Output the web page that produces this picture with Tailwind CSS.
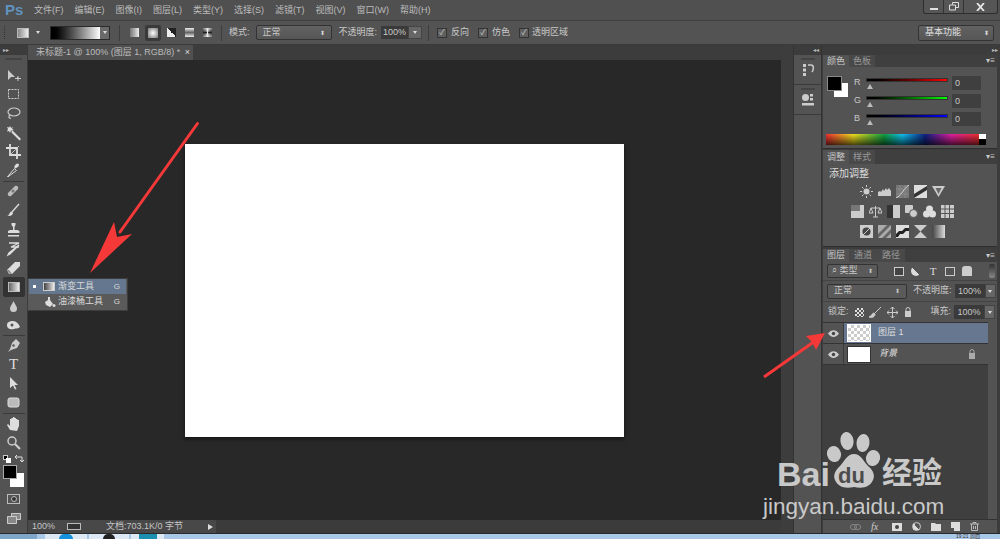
<!DOCTYPE html>
<html lang="zh-CN">
<head>
    <meta charset="UTF-8">
    <title>Photoshop CS6</title>
    <script src="https://cdn.jsdelivr.net/npm/@tailwindcss/browser@4"></script>
</head>
<body class="bg-[#535353]">
<div class="relative w-[1000px] h-[539px] overflow-hidden flex flex-col bg-[#535353] text-[#c8c8c8] text-[9px] font-['Liberation_Sans','Noto_Sans_CJK_SC',sans-serif]">

    <!-- menu bar -->
    <div class="h-[20px] shrink-0 flex items-center bg-[#505050] relative">
        <span class="w-[34px] pl-[5px] text-[15px] font-bold text-[#5f93bd]">Ps</span>
        <div class="flex gap-[11px] pt-[1px] text-[#bcbcbc]">
            <span>文件(F)</span><span>编辑(E)</span><span>图像(I)</span><span>图层(L)</span><span>类型(Y)</span><span>选择(S)</span><span>滤镜(T)</span><span>视图(V)</span><span>窗口(W)</span><span>帮助(H)</span>
        </div>
        <div class="absolute right-[2px] top-0 h-[14px] w-[75px] flex border border-t-0 border-[#2e2e2e] rounded-b-[3px] bg-[#565656] text-[#e8e8e8]">
            <div class="w-[20px] border-r border-[#333] flex items-end justify-center pb-[3px]"><div class="w-[8px] h-[2px] bg-[#e0e0e0]"></div></div>
            <div class="w-[20px] border-r border-[#333] flex items-center justify-center">
                <svg width="10" height="9" viewBox="0 0 10 9" fill="none" stroke="#e0e0e0"><path d="M3.500 2.500V.5h6v5H7"/><path d="M.5 3h6v5h-6z"/></svg>
            </div>
            <div class="flex-1 flex items-center justify-center">
                <svg width="9" height="8" viewBox="0 0 9 8" stroke="#e8e8e8" stroke-width="1.800"><path d="M1 0l7 8M8 0L1 8"/></svg>
            </div>
        </div>
    </div>

    <!-- options bar -->
    <div class="h-[25px] shrink-0 flex items-center bg-[#535353] border-t border-[#414141] border-b border-b-[#3a3a3a]">
        <div class="w-[2px] h-[13px] ml-[4px] border-l border-dotted border-[#333]"></div>
        <div class="ml-[11px] w-[12px] h-[10px] bg-gradient-to-r from-[#8a8a8a] to-[#f0f0f0] border border-[#bbb]"></div>
        <div class="ml-[7px] w-0 h-0 border-x-[2px] border-x-transparent border-t-[3px] border-t-[#ddd]"></div>
        <div class="ml-[10px] flex h-[14px] w-[60px] border border-[#2a2a2a]">
            <div class="w-[49px] bg-gradient-to-r from-black to-white"></div>
            <div class="flex-1 bg-[#6a6a6a] flex items-center justify-center"><div class="w-0 h-0 border-x-[2px] border-x-transparent border-t-[3px] border-t-[#ddd]"></div></div>
        </div>
        <div class="ml-[9px] w-px h-[16px] bg-[#3d3d3d]"></div>
        <div class="ml-[7px] flex items-center gap-[3px]">
            <div class="w-[15px] h-[15px] flex items-center justify-center"><div class="w-[9px] h-[9px] bg-gradient-to-r from-[#777] to-[#eee]"></div></div>
            <div class="w-[16px] h-[16px] bg-[#3a3a3a] rounded-[2px] flex items-center justify-center"><div class="w-[10px] h-[10px] bg-[radial-gradient(#fff,#777)]"></div></div>
            <div class="w-[15px] h-[15px] flex items-center justify-center"><div class="w-[9px] h-[9px] bg-[linear-gradient(45deg,#eee_50%,#222_50%)]"></div></div>
            <div class="w-[15px] h-[15px] flex items-center justify-center"><div class="w-[9px] h-[9px] bg-[linear-gradient(#eee,#666,#eee)]"></div></div>
            <div class="w-[15px] h-[15px] flex items-center justify-center"><div class="w-[9px] h-[9px] bg-[conic-gradient(#eee,#222,#eee,#222,#eee)]"></div></div>
        </div>
        <div class="ml-[6px] w-px h-[16px] bg-[#3d3d3d]"></div>
        <span class="ml-[7px]">模式:</span>
        <div class="ml-[6px] w-[76px] h-[15px] flex items-center justify-between px-[6px] rounded-[2px] border border-[#333] bg-gradient-to-b from-[#626262] to-[#565656]">
            <span>正常</span><span class="text-[6px] leading-[6px] text-[#ddd]">⬍</span>
        </div>
        <span class="ml-[7px]">不透明度:</span>
        <div class="ml-[4px] w-[27px] h-[13px] leading-[13px] bg-[#3a3a3a] text-center">100%</div>
        <div class="w-[14px] h-[13px] bg-[#666] border border-[#444] flex items-center justify-center"><div class="w-0 h-0 border-x-[2px] border-x-transparent border-t-[3px] border-t-[#ddd]"></div></div>
        <div class="ml-[6px] w-px h-[16px] bg-[#3d3d3d]"></div>
        <div class="ml-[8px] w-[10px] h-[10px] border border-[#333] bg-[#606060] text-[8px] leading-[8px] text-center">✓</div>
        <span class="ml-[4px]">反向</span>
        <div class="ml-[9px] w-[10px] h-[10px] border border-[#333] bg-[#606060] text-[8px] leading-[8px] text-center">✓</div>
        <span class="ml-[4px]">仿色</span>
        <div class="ml-[9px] w-[10px] h-[10px] border border-[#333] bg-[#606060] text-[8px] leading-[8px] text-center">✓</div>
        <span class="ml-[3px]">透明区域</span>
        <div class="ml-auto mr-[6px] w-[76px] h-[16px] flex items-center justify-between pl-[6px] pr-[4px] rounded-[2px] border border-[#333] bg-gradient-to-b from-[#626262] to-[#565656] text-[#e0e0e0]">
            <span>基本功能</span><span class="text-[6px] leading-[6px]">⬍</span>
        </div>
    </div>

    <div class="flex-1 min-h-0 flex">
        <!-- tools -->
        <div class="w-[28px] shrink-0 flex flex-col items-center bg-[#535353] border-r border-[#3a3a3a] text-[#ccc]">
            <div class="w-full h-[10px] bg-[#3c3c3c] text-[6px] leading-[10px] pl-[3px] text-[#bbb]">▸▸</div>
            <div class="w-[17px] h-[2px] mt-[3px] mb-[6px] bg-[#444]"></div>
            <div class="flex flex-col items-center">
                <svg class="w-[19px] h-[19px]" viewBox="0 0 19 19" fill="#ccc"><path d="M4 4v10l3-3h4zM12 11h1v1h1v-1h-1z"/><path d="M11 12h6v1h-6zM13.500 10h1v5h-1z"/></svg>
                <svg class="w-[19px] h-[19px]" viewBox="0 0 19 19" fill="none" stroke="#ccc" stroke-dasharray="2 1"><path d="M4.500 4.500h10v9h-10z"/></svg>
                <svg class="w-[19px] h-[19px]" viewBox="0 0 19 19" fill="none" stroke="#ccc" stroke-width="1.200"><ellipse cx="10" cy="8" rx="6" ry="4"/><path d="M6 11c-2 1-1 4 1 3"/></svg>
                <svg class="w-[19px] h-[19px]" viewBox="0 0 19 19" fill="#ddd"><path d="M8 7l1.500 1.500L17 16l-1.500 1.500-8-8z"/><path d="M6 3l1 2 2-1-1 2 2 1-3 .5L6 10l-1-2-2 .5L4 6 3 4l2 .5z"/></svg>
                <svg class="w-[19px] h-[19px]" viewBox="0 0 19 19" fill="none" stroke="#ddd" stroke-width="1.800"><path d="M6 2v11h11M2 6h11v11"/><path d="M15 4L5 14" stroke-width=".8"/></svg>
                <svg class="w-[19px] h-[19px]" viewBox="0 0 19 19"><path d="M5 15l-1 1-.5-.5 1-1 6-7 2 2z" fill="none" stroke="#ddd"/><path d="M10 6l2-3 2-.5 1 1-.5 2-3 2z" fill="#ddd"/></svg>
            </div>
            <div class="w-[21px] h-px mt-[1px] bg-[#3a3a3a]"></div>
            <div class="flex flex-col items-center">
                <svg class="w-[19px] h-[19px]" viewBox="0 0 19 19"><path d="M4 11l7-7c2-1 4 1 3 3l-7 7c-2 1-4-1-3-3z" fill="#bbb"/><circle cx="9" cy="9" r="1.500" fill="#777"/></svg>
                <svg class="w-[19px] h-[19px]" viewBox="0 0 19 19"><path d="M15 3L8 11" stroke="#ddd" stroke-width="1.300"/><path d="M8 10.500c-2 0-2.500 2-3 3s-1.500 1-2 1c2 1 5 .5 6-2z" fill="#ddd"/></svg>
                <svg class="w-[19px] h-[19px]" viewBox="0 0 19 19" fill="#ddd"><path d="M7.500 3h4v2l-1 2v3h3l2 1v2H4v-2l2-1h3V7L7.500 5zM4 15h11v1.500H4z"/></svg>
                <svg class="w-[19px] h-[19px]" viewBox="0 0 19 19" fill="none" stroke="#ddd" stroke-width="1.300"><path d="M5 4h10l-8 4h8"/><path d="M15 6L6 15l-2 1 1-2z" fill="#ddd"/></svg>
                <svg class="w-[19px] h-[19px]" viewBox="0 0 19 19"><path d="M3 12l8-8h5v4l-8 8H5z" fill="#ddd"/><path d="M3 12l3 4h2l-3-4z" fill="#888"/></svg>
            </div>
            <div class="w-[22px] h-[20px] shrink-0 bg-[#333] rounded-[2px] flex items-center justify-center"><div class="w-[12px] h-[10px] bg-gradient-to-r from-[#666] to-[#eee] border border-[#bbb]"></div></div>
            <div class="flex flex-col items-center">
                <svg class="w-[19px] h-[19px]" viewBox="0 0 19 19"><path d="M9.500 4c-1 3-3.500 5-3.500 7.500a3.500 3.500 0 0 0 7 0C13 9 10.500 7 9.500 4z" fill="#ccc"/></svg>
                <svg class="w-[19px] h-[19px]" viewBox="0 0 19 19"><path d="M3 9c0-3 3-4 6-4s6 3 7 6c-2 2-4 1-6 2-3 1-7 0-7-4z" fill="#ddd"/><circle cx="8" cy="9" r="1.500" fill="#555"/></svg>
            </div>
            <div class="w-[22px] h-px bg-[#3a3a3a]"></div>
            <div class="flex flex-col items-center">
                <svg class="w-[19px] h-[19px]" viewBox="0 0 19 19"><path d="M12 3l4 4-3 5-6 2-3 2 2-3 2-6z" fill="#ccc"/><circle cx="9.500" cy="9.500" r="1.200" fill="#555"/></svg>
                <div class="w-[19px] h-[19px] text-center text-[15px] leading-[19px] text-[#ddd] font-['Liberation_Serif',serif]">T</div>
                <svg class="w-[19px] h-[19px]" viewBox="0 0 19 19"><path d="M6 3v11l3-2.500 2 4 1.500-.5-2-4h3.500z" fill="#ddd"/></svg>
                <svg class="w-[19px] h-[19px]" viewBox="0 0 19 19"><rect x="4" y="5" width="11" height="9" rx="2" fill="#bbb" stroke="#ddd"/></svg>
            </div>
            <div class="w-[22px] h-px mt-[1px] bg-[#3a3a3a]"></div>
            <div class="flex flex-col items-center">
                <svg class="w-[19px] h-[19px]" viewBox="0 0 19 19" fill="#ddd"><path d="M6 16l-3-5 1-1 2 2V5h1.500v-1H9v-1h1.500v1H12v1h1.500v1H15v6l-2 5z"/></svg>
                <svg class="w-[19px] h-[19px]" viewBox="0 0 19 19" fill="none" stroke="#ccc" stroke-width="1.500"><circle cx="8" cy="8" r="4"/><path d="M11 11l5 5" stroke-width="2.200"/></svg>
            </div>
            <div class="w-full flex justify-between px-[3px] mt-[1px] h-[11px] items-center">
                <div class="relative w-[8px] h-[8px]"><div class="absolute left-0 top-0 w-[5px] h-[5px] bg-black border border-[#ccc]"></div><div class="absolute right-0 bottom-0 w-[5px] h-[5px] bg-white"></div></div>
                <svg class="w-[9px] h-[9px]" viewBox="0 0 9 9" fill="none" stroke="#ddd"><path d="M1 3h6v5M0 3l2-2M0 3l2 2M5 6l2 2 2-2"/></svg>
            </div>
            <div class="relative w-[21px] h-[23px] mt-[1px] shrink-0">
                <div class="absolute left-[7px] top-[8px] w-[14px] h-[14px] bg-white"></div>
                <div class="absolute left-0 top-0 w-[14px] h-[14px] bg-black border border-[#aaa]"></div>
            </div>
            <div class="w-[13px] h-[10px] mt-[6px] border border-[#bbb] flex items-center justify-center"><div class="w-[6px] h-[6px] rounded-full border border-[#bbb] bg-[#333]"></div></div>
            <svg class="w-[14px] h-[11px] mt-[9px]" viewBox="0 0 14 11" fill="#888" stroke="#ccc"><path d="M4.500.5h9v6h-9z"/><path d="M.5 3.500h9v7h-9z"/></svg>
        </div>

        <!-- document area -->
        <div class="w-[753px] shrink-0 flex flex-col">
            <div class="h-[15px] shrink-0 bg-[#3c3c3c] flex">
                <div class="w-[165px] pl-[8px] pr-[3px] flex items-center justify-between bg-[#505050] text-[#bcbcbc]">
                    <span>未标题-1 @ 100% (图层 1, RGB/8) *</span><span class="text-[#ddd]">×</span>
                </div>
            </div>
            <div class="flex-1 min-h-0 bg-[#282828] pl-[157px] pt-[84px]">
                <div class="w-[439px] h-[293px] bg-white shadow-[0_2px_4px_rgba(0,0,0,0.5)]"></div>
            </div>
            <div class="h-[13px] shrink-0 bg-[#3b3b3b] flex">
                <div class="w-[188px] flex items-center bg-[#484848] text-[#c4c4c4] pl-[4px]">
                    <span class="w-[35px]">100%</span>
                    <div class="w-[14px] h-[7px] border border-[#bbb] bg-[#333]"></div>
                    <span class="ml-[25px]">文档:703.1K/0 字节</span>
                    <div class="ml-auto mr-[3px] w-0 h-0 border-y-[3px] border-y-transparent border-l-[5px] border-l-[#ddd]"></div>
                </div>
            </div>
        </div>

        <!-- scrollbar gutter -->
        <div class="w-[12px] shrink-0 bg-[#3d3d3d]"></div>

        <!-- collapsed dock -->
        <div class="w-[29px] shrink-0 flex flex-col bg-[#535353] border-x border-[#333]">
            <div class="h-[10px] bg-[#3c3c3c] text-[6px] leading-[10px] text-right pr-[2px] text-[#bbb]">◂◂</div>
            <div class="h-[30px] border-b border-[#3a3a3a] flex flex-col items-center">
                <div class="w-[14px] h-[2px] mt-[3px] bg-[#444]"></div>
                <svg class="w-[14px] h-[14px] mt-[3px]" viewBox="0 0 14 14" fill="#ccc"><path d="M2 1h3v3H2zM2 5.500h3v3H2zM2 10h3v3H2z"/><path d="M7 2h3c3 0 3 4 1 7" fill="none" stroke="#ccc" stroke-width="1.500"/></svg>
            </div>
            <div class="h-[30px] border-b border-[#3a3a3a] flex flex-col items-center">
                <div class="w-[14px] h-[2px] mt-[3px] bg-[#444]"></div>
                <svg class="w-[14px] h-[14px] mt-[3px]" viewBox="0 0 14 14" fill="#ccc"><circle cx="4.500" cy="4.500" r="3.500"/><path d="M9 1h3v2.500H9zM9 5h3v2.500H9zM1 10h12v2.500H1z"/></svg>
            </div>
        </div>

        <!-- panels -->
        <div class="flex-1 flex flex-col pl-px bg-[#3c3c3c] text-[#c8c8c8]">
            <div class="h-[10px] shrink-0 text-[6px] leading-[10px] text-right pr-[2px] text-[#bbb]">▸▸</div>

            <!-- color -->
            <div class="h-[94px] shrink-0 mr-[3px] flex flex-col bg-[#535353] border-b border-[#2e2e2e]">
                <div class="h-[12px] shrink-0 flex bg-[#3f3f3f]">
                    <span class="w-[26px] bg-[#535353] text-center leading-[12px]">颜色</span>
                    <span class="w-[26px] bg-[#494949] text-center leading-[12px] text-[#999]">色板</span>
                    <span class="ml-auto mr-[2px] text-[8px] leading-[12px]">▾≡</span>
                </div>
                <div class="flex mt-[9px] pl-[4px]">
                    <div class="relative w-[24px] h-[24px] shrink-0">
                        <div class="absolute left-[7px] top-[7px] w-[14px] h-[14px] bg-white"></div>
                        <div class="absolute left-0 top-0 w-[15px] h-[15px] bg-black border border-[#888]"></div>
                    </div>
                    <div class="ml-[3px] flex flex-col gap-[4px]">
                        <div class="flex items-center h-[14px]">
                            <span class="w-[12px]">R</span>
                            <div class="relative mb-[6px] w-[82px] h-[4px] bg-gradient-to-r from-black to-[#ff0000] border border-[#333]"><div class="absolute left-0 top-[5px] w-0 h-0 border-x-[3px] border-x-transparent border-b-[5px] border-b-[#bbb]"></div></div>
                            <div class="ml-[4px] w-[29px] h-[14px] leading-[14px] pl-[3px] bg-[#3f3f3f]">0</div>
                        </div>
                        <div class="flex items-center h-[14px]">
                            <span class="w-[12px]">G</span>
                            <div class="relative mb-[6px] w-[82px] h-[4px] bg-gradient-to-r from-black to-[#00ff00] border border-[#333]"><div class="absolute left-0 top-[5px] w-0 h-0 border-x-[3px] border-x-transparent border-b-[5px] border-b-[#bbb]"></div></div>
                            <div class="ml-[4px] w-[29px] h-[14px] leading-[14px] pl-[3px] bg-[#3f3f3f]">0</div>
                        </div>
                        <div class="flex items-center h-[14px]">
                            <span class="w-[12px]">B</span>
                            <div class="relative mb-[6px] w-[82px] h-[4px] bg-gradient-to-r from-black to-[#0000ff] border border-[#333]"><div class="absolute left-0 top-[5px] w-0 h-0 border-x-[3px] border-x-transparent border-b-[5px] border-b-[#bbb]"></div></div>
                            <div class="ml-[4px] w-[29px] h-[14px] leading-[14px] pl-[3px] bg-[#3f3f3f]">0</div>
                        </div>
                    </div>
                </div>
                <div class="relative ml-[3px] mt-[8px] w-[160px] h-[11px]">
                    <div class="w-[153px] h-full bg-[linear-gradient(to_bottom,transparent,rgba(0,0,0,0.7)),linear-gradient(to_right,#f03030,#f0e020_18%,#10a040_38%,#10c0f0_50%,#102080_65%,#e020a0_82%,#f03030)]"></div>
                    <div class="absolute right-0 top-0 w-[7px] h-[5px] bg-white"></div>
                    <div class="absolute right-0 bottom-0 w-[7px] h-[6px] bg-black"></div>
                </div>
            </div>

            <!-- adjustments -->
            <div class="h-[97px] shrink-0 mt-[1px] mr-[3px] flex flex-col bg-[#535353] border-b border-[#2e2e2e]">
                <div class="h-[14px] shrink-0 flex bg-[#3f3f3f]">
                    <span class="w-[26px] bg-[#535353] text-center leading-[14px]">调整</span>
                    <span class="w-[26px] bg-[#494949] text-center leading-[14px] text-[#999]">样式</span>
                    <span class="ml-auto mr-[2px] text-[8px] leading-[14px]">▾≡</span>
                </div>
                <div class="pl-[6px] mt-[3px] text-[10px] leading-[14px] text-[#ddd]">添加调整</div>
                <div class="flex flex-col items-center gap-[7px] mt-[4px] pr-[16px]">
                    <div class="flex gap-[5px]">
                        <svg class="w-[13px] h-[13px]" viewBox="0 0 13 13"><circle cx="6.500" cy="6.500" r="3" fill="#ccc"/><path d="M6.500 0v2M6.500 11v2M0 6.500h2M11 6.500h2M2 2l1.500 1.500M9.500 9.500L11 11M2 11l1.500-1.500M9.500 3.500L11 2" stroke="#ccc"/></svg>
                        <svg class="w-[13px] h-[13px]" viewBox="0 0 13 13"><path d="M0 11V7l2-1 1 1 2-3 1 2 2-3 1 2 2-2 2 3v5z" fill="#ccc"/></svg>
                        <svg class="w-[13px] h-[13px]" viewBox="0 0 13 13"><rect width="13" height="13" fill="#777"/><path d="M0 13C5 11 8 3 13 0" stroke="#ddd" fill="none"/><path d="M4 0v13M9 0v13M0 4h13M0 9h13" stroke="#999" stroke-width=".5"/></svg>
                        <svg class="w-[13px] h-[13px]" viewBox="0 0 13 13"><rect width="13" height="13" fill="#ddd"/><path d="M0 13V9L13 1v4z" fill="#333"/></svg>
                        <svg class="w-[13px] h-[13px]" viewBox="0 0 13 13"><path d="M0 1h13L6.500 12z" fill="#ccc"/><path d="M3.500 3h6L6.500 9z" fill="#666"/></svg>
                    </div>
                    <div class="flex gap-[5px]">
                        <svg class="w-[13px] h-[13px]" viewBox="0 0 13 13"><rect width="13" height="13" fill="#ccc"/><path d="M0 0h9v6H0z" fill="#777"/></svg>
                        <svg class="w-[13px] h-[13px]" viewBox="0 0 13 13" fill="none" stroke="#ccc"><path d="M6.500 1v11M2 3h9M2 3L0 8h4zM11 3L9 8h4zM4 12h5"/></svg>
                        <svg class="w-[13px] h-[13px]" viewBox="0 0 13 13"><rect width="13" height="13" fill="#ccc"/><rect width="6" height="13" fill="#333"/></svg>
                        <svg class="w-[13px] h-[13px]" viewBox="0 0 13 13" fill="#ccc"><rect x="0" y="0" width="8" height="8" rx="1"/><circle cx="8.500" cy="8.500" r="4" stroke="#555"/></svg>
                        <svg class="w-[13px] h-[13px]" viewBox="0 0 13 13" fill="#ddd"><circle cx="6.500" cy="4" r="3.500"/><circle cx="3.500" cy="9" r="3.500"/><circle cx="9.500" cy="9" r="3.500"/></svg>
                        <svg class="w-[13px] h-[13px]" viewBox="0 0 13 13"><rect width="13" height="13" fill="#ccc"/><path d="M4 0v13M8.500 0v13M0 4h13M0 8.500h13" stroke="#555"/></svg>
                    </div>
                    <div class="flex gap-[5px]">
                        <svg class="w-[13px] h-[13px]" viewBox="0 0 13 13"><rect width="13" height="13" fill="#ccc"/><circle cx="6.500" cy="6.500" r="4" fill="#444"/><path d="M3 10L10 3" stroke="#ccc"/></svg>
                        <svg class="w-[13px] h-[13px]" viewBox="0 0 13 13"><rect width="13" height="13" fill="#aaa"/><path d="M0 9L9 0h4L0 13zM13 4v4l-5 5H4z" fill="#666"/></svg>
                        <svg class="w-[13px] h-[13px]" viewBox="0 0 13 13"><rect width="13" height="13" fill="#ddd"/><path d="M0 9l3-3h3l3-3h4v3h-3l-3 3H4l-2 3H0z" fill="#222"/></svg>
                        <svg class="w-[13px] h-[13px]" viewBox="0 0 13 13"><rect width="13" height="13" fill="#ccc"/><path d="M0 0l6.500 6.500L0 13zM13 0L6.500 6.500 13 13z" fill="#555"/></svg>
                        <div class="w-[13px] h-[13px] bg-gradient-to-r from-[#444] to-[#ddd]"></div>
                    </div>
                </div>
            </div>

            <!-- layers -->
            <div class="flex-1 mt-[2px] mr-[3px] flex flex-col bg-[#535353]">
                <div class="h-[13px] shrink-0 flex bg-[#3f3f3f]">
                    <span class="w-[26px] bg-[#535353] text-center leading-[13px]">图层</span>
                    <span class="w-[28px] bg-[#494949] text-center leading-[13px] text-[#999]">通道</span>
                    <span class="w-[28px] bg-[#494949] text-center leading-[13px] text-[#999]">路径</span>
                    <span class="ml-auto mr-[2px] text-[8px] leading-[13px]">▾≡</span>
                </div>
                <div class="h-[19px] shrink-0 flex items-center pl-[4px] border-b border-[#444]">
                    <div class="w-[51px] h-[14px] flex items-center justify-between px-[4px] rounded-[2px] border border-[#333] bg-[#5a5a5a]"><span>⌕ 类型</span><span class="text-[6px]">⬍</span></div>
                    <div class="ml-[16px] flex gap-[7px] items-center">
                        <div class="w-[10px] h-[9px] border border-[#ccc] bg-[#444]"></div>
                        <div class="w-[10px] h-[10px] rounded-full bg-[linear-gradient(45deg,#ddd_50%,#555_50%)]"></div>
                        <span class="w-[10px] text-center text-[11px] leading-[10px] font-['Liberation_Serif',serif] text-[#ddd]">T</span>
                        <div class="w-[10px] h-[9px] border border-[#ccc]"></div>
                        <div class="w-[10px] h-[10px] bg-[#ccc] rounded-t-[3px]"></div>
                    </div>
                    <div class="ml-auto mr-[2px] w-[6px] h-[14px] rounded-[2px] bg-gradient-to-b from-[#333] to-[#888]"></div>
                </div>
                <div class="h-[21px] shrink-0 flex items-center pl-[4px] border-b border-[#444]">
                    <div class="w-[80px] h-[15px] flex items-center justify-between px-[6px] rounded-[2px] border border-[#333] bg-[#5a5a5a]"><span>正常</span><span class="text-[6px]">⬍</span></div>
                    <span class="ml-[6px]">不透明度:</span>
                    <div class="ml-[3px] w-[30px] h-[14px] leading-[14px] text-center bg-[#3a3a3a]">100%</div>
                    <div class="w-[11px] h-[14px] bg-[#666] border border-[#444] flex items-center justify-center"><div class="w-0 h-0 border-x-[2px] border-x-transparent border-t-[3px] border-t-[#ddd]"></div></div>
                </div>
                <div class="h-[20px] shrink-0 flex items-center pl-[5px]">
                    <span>锁定:</span>
                    <div class="ml-[6px] w-[9px] h-[9px] bg-[repeating-conic-gradient(#ddd_0_25%,#555_0_50%)] bg-[length:4px_4px]"></div>
                    <svg class="ml-[5px] w-[13px] h-[11px]" viewBox="0 0 13 11"><path d="M12 0L5 7M5 6c-2 0-2 3-5 4 3 1 6 0 6-3z" stroke="#ccc" fill="#ccc"/></svg>
                    <svg class="ml-[5px] w-[11px] h-[11px]" viewBox="0 0 11 11" stroke="#ccc" fill="none"><path d="M5.500 0v11M0 5.500h11M3.500 2l2-2 2 2M3.500 9l2 2 2-2M2 3.500l-2 2 2 2M9 3.500l2 2-2 2"/></svg>
                    <svg class="ml-[6px] w-[8px] h-[10px]" viewBox="0 0 8 10"><path d="M1 4h6v6H1z" fill="#ccc"/><path d="M2 4V2.500a2 2 0 0 1 4 0V4" stroke="#ccc" fill="none"/></svg>
                    <span class="ml-[19px]">填充:</span>
                    <div class="ml-[3px] w-[30px] h-[14px] leading-[14px] text-center bg-[#3a3a3a]">100%</div>
                    <div class="w-[11px] h-[14px] bg-[#666] border border-[#444] flex items-center justify-center"><div class="w-0 h-0 border-x-[2px] border-x-transparent border-t-[3px] border-t-[#ddd]"></div></div>
                </div>

                <div class="flex-1 flex flex-col bg-[#3f3f3f] mr-[9px] border-t border-[#333]">
                    <div class="h-[21px] flex items-center bg-[#67778f] border-b border-[#333]">
                        <div class="w-[21px] h-full flex items-center justify-center bg-[#535353] border-r border-[#3a3a3a]">
                            <svg class="w-[11px] h-[7px]" viewBox="0 0 11 7"><path d="M0 3.500C3-1 8-1 11 3.500 8 8 3 8 0 3.500z" fill="#ccc"/><circle cx="5.500" cy="3.500" r="1.700" fill="#444"/></svg>
                        </div>
                        <div class="ml-[3px] w-[24px] h-[18px] border border-white bg-[repeating-conic-gradient(#ccc_0_25%,#fff_0_50%)] bg-[length:6px_6px]"></div>
                        <span class="ml-[7px] text-[#ddd]">图层 1</span>
                    </div>
                    <div class="h-[21px] flex items-center bg-[#535353] border-b border-[#333]">
                        <div class="w-[21px] h-full flex items-center justify-center border-r border-[#3a3a3a]">
                            <svg class="w-[11px] h-[7px]" viewBox="0 0 11 7"><path d="M0 3.500C3-1 8-1 11 3.500 8 8 3 8 0 3.500z" fill="#ccc"/><circle cx="5.500" cy="3.500" r="1.700" fill="#444"/></svg>
                        </div>
                        <div class="ml-[3px] w-[24px] h-[17px] border border-[#333] bg-white"></div>
                        <span class="ml-[8px] italic text-[#ddd]">背景</span>
                        <svg class="ml-auto mr-[12px] w-[8px] h-[10px]" viewBox="0 0 8 10"><path d="M1 4h6v6H1z" fill="#aaa"/><path d="M2 4V2.500a2 2 0 0 1 4 0V4" stroke="#aaa" fill="none"/></svg>
                    </div>
                </div>
                <div class="h-[14px] shrink-0 flex items-center pl-[27px] gap-[10px] bg-[#535353] border-t border-[#333]">
                    <svg class="w-[11px] h-[6px]" viewBox="0 0 11 6" fill="none" stroke="#888"><rect x=".5" y=".5" width="6" height="5" rx="2.500"/><rect x="4.500" y=".5" width="6" height="5" rx="2.500"/></svg>
                    <span class="w-[11px] italic font-['Liberation_Serif',serif] text-[10px] leading-[10px] text-[#ccc]">fx</span>
                    <div class="w-[10px] h-[8px] bg-[#ddd] flex items-center justify-center"><div class="w-[4px] h-[4px] rounded-full bg-[#444]"></div></div>
                    <div class="w-[9px] h-[9px] rounded-full bg-[linear-gradient(45deg,#ddd_50%,#555_50%)] border border-[#ccc]"></div>
                    <svg class="w-[10px] h-[8px]" viewBox="0 0 10 8" fill="#ddd"><path d="M0 0h4l1 1h5v7H0z"/></svg>
                    <svg class="w-[9px] h-[9px]" viewBox="0 0 9 9" fill="#ddd"><path d="M0 0h9v9H3V6H0z"/></svg>
                    <svg class="w-[9px] h-[9px]" viewBox="0 0 9 9" fill="none" stroke="#bbb"><path d="M0 2h9M3 2V.5h3V2M1.500 2v6.500h6V2M3.500 4v3M5.500 4v3"/></svg>
                </div>
            </div>
        </div>
    </div>

    <!-- taskbar strip -->
    <div class="h-[6px] shrink-0 flex bg-[#a9c7e6] border-t border-[#2a2a2a]">
        <div class="w-[37px] bg-[#7fa6c9]"></div>
        <div class="ml-[8px] w-[42px] bg-[#dce9f5] flex justify-center"><div class="w-[14px] h-full rounded-t-full bg-[#1590dc]"></div></div>
        <div class="ml-[2px] w-[40px] bg-[#dce9f5] flex justify-center"><div class="w-[12px] h-full rounded-t-full bg-[#222]"></div></div>
        <div class="ml-[2px] w-[33px] bg-[#dce9f5] flex justify-center"><div class="w-[18px] h-full bg-[#1a8fb0]"></div></div>
        <div class="ml-auto mr-[20px] text-[5px] leading-[5px] text-[#333]">19:21 周四</div>
    </div>

    <!-- flyout menu -->
    <div class="absolute left-[27px] top-[278px] w-[101px] h-[33px] px-px bg-[#5a5a5a] border border-[#3d3d3d] text-[#d8d8d8]">
        <div class="h-[15px] flex items-center bg-[#64778f]">
            <div class="ml-[4px] w-[3px] h-[3px] bg-white"></div>
            <div class="ml-[7px] w-[12px] h-[9px] bg-gradient-to-r from-[#444] to-[#eee] border border-[#ccc]"></div>
            <span class="ml-[3px]">渐变工具</span>
            <span class="ml-auto mr-[6px] text-[8px]">G</span>
        </div>
        <div class="h-[15px] flex items-center">
            <svg class="ml-[15px] w-[12px] h-[12px]" viewBox="0 0 12 12"><path d="M4 1h2v3l3 4-3 3-4-2-1-3 3-2z" fill="#ddd"/><circle cx="10" cy="9.500" r="1.500" fill="#ddd"/></svg>
            <span class="ml-[2px]">油漆桶工具</span>
            <span class="ml-auto mr-[6px] text-[8px]">G</span>
        </div>
    </div>

    <!-- red arrows drawn on the screenshot -->
    <svg class="absolute left-0 top-0 pointer-events-none" width="1000" height="539" viewBox="0 0 1000 539">
        <path d="M197.500 123.500L120 232" stroke="#f53838" stroke-width="3" stroke-linecap="round"/>
        <path d="M90 273L114 222 L117 237 L132 234z" fill="#f53838"/>
        <path d="M764 377L815 341" stroke="#f53838" stroke-width="3"/>
        <path d="M825 333L806 336L812 342L816 350z" fill="#f53838"/>
    </svg>

    <!-- watermark -->
    <div class="absolute left-[777px] top-[432px] w-[170px] h-[86px] text-[#c9c9c9] pointer-events-none font-['Liberation_Sans','Noto_Sans_CJK_SC',sans-serif]">
        <svg class="absolute left-[50px] top-0" width="54" height="58" viewBox="0 0 54 58" fill="#c9c9c9">
            <ellipse cx="7" cy="22" rx="7" ry="8" transform="rotate(-15 7 22)"/>
            <ellipse cx="20" cy="9" rx="6.500" ry="9" transform="rotate(-8 20 9)"/>
            <ellipse cx="36" cy="11" rx="6.500" ry="9" transform="rotate(8 36 11)"/>
            <ellipse cx="46" cy="26" rx="7" ry="8" transform="rotate(15 46 26)"/>
            <path d="M27 22c7 0 10 8 14 12 6 5 7 10 5 14-3 7-10 9-19 7-9 2-16 0-19-7-2-5 0-9 5-14 4-4 7-12 14-12z"/>
        </svg>
        <span class="absolute left-[0px] top-[23px] text-[34px] leading-[38px] font-bold">Bai</span>
        <span class="absolute left-[61px] top-[31px] text-[22px] leading-[26px] font-bold text-[#4c4c4c]">du</span>
        <span class="absolute left-[105px] top-[24px] text-[30px] leading-[34px] font-bold whitespace-nowrap">经验</span>
        <span class="absolute left-[-14px] top-[63px] text-[22.500px] leading-[24px] whitespace-nowrap">jingyan.baidu.com</span>
    </div>
</div>
</body>
</html>
